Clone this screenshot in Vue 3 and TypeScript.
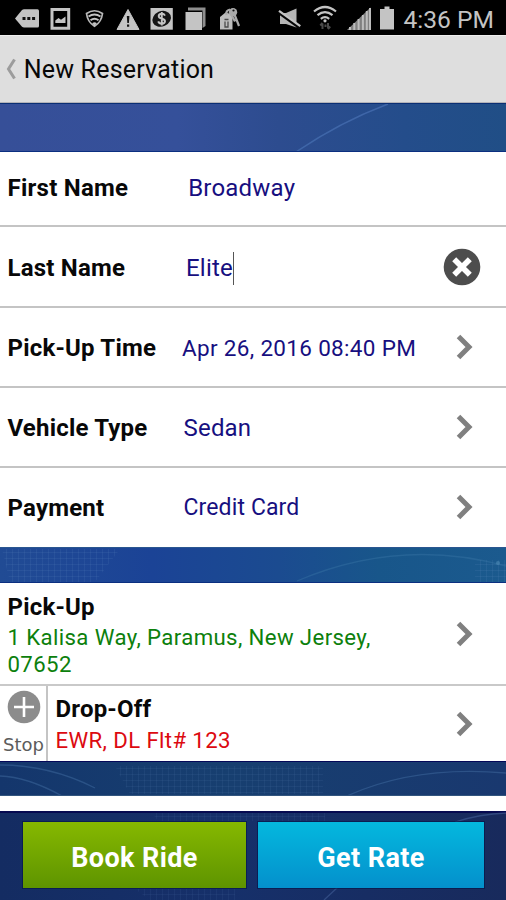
<script setup lang="ts">
interface Field {
  label: string
  value: string
  kind: string
  action: 'none' | 'clear' | 'open'
}

const fields: Field[] = [
  { label: 'First Name', value: 'Broadway', kind: 'first', action: 'none' },
  { label: 'Last Name', value: 'Elite', kind: 'last', action: 'clear' },
  { label: 'Pick-Up Time', value: 'Apr 26, 2016 08:40 PM', kind: 'time', action: 'open' },
  { label: 'Vehicle Type', value: 'Sedan', kind: 'vehicle', action: 'open' },
  { label: 'Payment', value: 'Credit Card', kind: 'payment', action: 'open' },
]
</script>

<template>
  <div class="screen">
    <div class="status">
      <svg width="45" height="36" viewBox="0 0 45 36">
        <path d="M15 18.5 22 10Q23 9.300 24 9.300H37.500Q39 9.300 39 11V26Q39 27.500 37.500 27.500H24Q23 27.500 22 26.700Z" fill="#c4c4c4" />
        <path d="M22.500 17h3v3h-3zM27.300 17h3v3h-3zM32.100 17h3v3h-3z" fill="#111" />
      </svg>
      <svg width="32" height="36" viewBox="45 0 32 36">
        <path d="M52 9.500H68.700V28.300H52Z" fill="none" stroke="#c4c4c4" stroke-width="3" />
        <path d="M55.300 23V20.500L58.500 18 61 19.800 65.500 16.500V23Z" fill="#c4c4c4" />
      </svg>
      <svg width="33" height="36" viewBox="77 0 33 36">
        <path d="M86.500 13.500Q94.500 8 102.500 13.500Q101.500 22 94.500 26.300Q87.500 22 86.500 13.500Z" fill="none" stroke="#b8b8b8" stroke-width="1.700" />
        <path d="M88.500 16.500Q94.500 12.500 100.500 16.500M90.500 20.300Q94.500 17 98.500 20.300" fill="none" stroke="#c4c4c4" stroke-width="1.900" />
        <path d="M92.200 23.200Q94.500 21.200 96.800 23.200L94.500 26Z" fill="#c4c4c4" />
      </svg>
      <svg width="35" height="36" viewBox="110 0 35 36">
        <path d="M128 9.500 139 29.500H117Z" fill="#c4c4c4" stroke="#c4c4c4" stroke-linejoin="round" />
        <path d="M126.800 16h2.600l-.5 7h-1.600zM127 24.500h2.200v2.300H127z" fill="#111" />
      </svg>
      <svg width="34" height="36" viewBox="145 0 34 36">
        <path d="M150.500 8H172.800V29.700H150.500Z" fill="#c4c4c4" />
        <ellipse cx="161.700" cy="18.800" rx="9.600" ry="7.600" fill="#151515" transform="rotate(-24 161.700 18.800)" />
        <path d="M165 15.700Q164 13.700 161.700 13.800Q158.600 14 158.700 16.200Q158.900 18.100 161.900 18.700Q165 19.400 165 21.400Q164.800 23.600 161.900 23.800Q159 23.700 158.200 21.400M161.800 12V25.600" fill="none" stroke="#c4c4c4" stroke-width="1.900" />
      </svg>
      <svg width="33" height="36" viewBox="179 0 33 36">
        <path d="M188 7.500H205.500V26L202.500 28V10.500H188Z" fill="#8e8e8e" />
        <path d="M185.500 12H202V30H185.500Z" fill="#c4c4c4" />
      </svg>
      <svg width="33" height="36" viewBox="212 0 33 36">
        <path d="M220 17 225.500 12.500 231 14 232.500 18V29.500H220Z" fill="#bdbdbd" />
        <path d="M224.500 19.500h4M225 21.500v5.500h3v-5.500" fill="none" stroke="#4c4c4c" stroke-width="1.300" />
        <circle cx="233" cy="12.200" r="4.200" fill="#aaa" />
        <circle cx="233.500" cy="10.500" r="1.100" fill="#111" />
        <path d="M226.500 15Q225.500 10.500 230 9.500M234.500 14.500 239 26M232 16 235 21.500" fill="none" stroke="#aaa" stroke-width="2.200" />
      </svg>
      <svg class="mute" width="33" height="36" viewBox="275 0 33 36">
        <path d="M280 13H286L296.500 8.500V27.500L286 24H280Z" fill="#b5b5b5" />
        <path d="M279 12.800 300 28" stroke="#050505" stroke-width="3" />
        <path d="M279 10.800 300.300 26.200" stroke="#c4c4c4" stroke-width="2.200" />
      </svg>
      <svg width="35" height="36" viewBox="308 0 35 36">
        <path d="M314 11.500Q325 2.500 336 11.500M317.500 15.200Q325 9 332.500 15.200M320.800 18.800Q325 15.500 329.200 18.800" fill="none" stroke="#c4c4c4" stroke-width="2.200" />
        <circle cx="325" cy="20.800" r="1.600" fill="#c4c4c4" />
        <path d="M322.500 29V23.500M320.300 25.500 322.500 23 M328 23V28.500M330.200 26.500 328 29M325.500 24.500V27" fill="none" stroke="#4a4a4a" stroke-width="2" />
      </svg>
      <svg width="32" height="36" viewBox="343 0 32 36">
        <path d="M347 30 370.500 7.500V30Z" fill="#808080" />
        <path d="M350 30V27M354.300 30V23M358.600 30V19M362.900 30V15M366.800 30V11M370 30V8" stroke="#bcbcbc" stroke-width="2" />
      </svg>
      <svg width="25" height="36" viewBox="375 0 25 36">
        <path d="M384.500 6.500H389.500V9H394V29.500H380V9H384.500Z" fill="#c4c4c4" />
      </svg>
      <span class="clock">4:36 PM</span>
    </div>

    <header class="bar">
      <svg class="back" width="12" height="24" viewBox="0 0 12 24">
        <path d="M9.500 2.500 3.500 12 9.500 21.500" fill="none" stroke="#9c9c9c" stroke-width="3" />
      </svg>
      <h1>New Reservation</h1>
    </header>

    <div class="band band-top">
      <svg width="506" height="49" viewBox="0 103 506 49">
        <path d="M296 152Q340 122 388 104" fill="none" stroke="#3f66a8" stroke-width="1.500" />
      </svg>
    </div>

    <section class="fields">
      <div v-for="f in fields" :key="f.label" class="row" :class="f.kind">
        <span class="label">{{ f.label }}</span>
        <span class="value">{{ f.value }}<i v-if="f.kind === 'last'" class="caret"></i></span>
        <svg v-if="f.action === 'clear'" class="clear" width="38" height="38" viewBox="0 0 38 38">
          <circle cx="19" cy="19" r="18.300" fill="#4d4d4d" />
          <path d="M11.200 11.200 26.800 26.800M26.800 11.200 11.200 26.800" stroke="#fff" stroke-width="5.600" />
        </svg>
        <svg v-if="f.action === 'open'" class="chev" width="18" height="26" viewBox="0 0 18 26">
          <path d="M2.500 2.500 13 13 2.500 23.500" fill="none" stroke="#808080" stroke-width="5" />
        </svg>
      </div>
    </section>

    <div class="band band-mid">
      <svg width="506" height="36" viewBox="0 547 506 36">
        <defs>
          <pattern id="meshMid" width="6" height="6" patternUnits="userSpaceOnUse">
            <path d="M0 .5H6M.5 0V6" stroke="#6b93cb" stroke-opacity=".12" />
          </pattern>
        </defs>
        <path d="M2 549H120L95 582H10Z" fill="url(#meshMid)" />
        <path d="M475 560H506V582H475Z" fill="url(#meshMid)" />
        <path d="M297 581Q400 537 506 566" fill="none" stroke="#3c78a8" stroke-opacity=".4" stroke-width="1.300" />
        <circle cx="498" cy="563" r="2" fill="#4f8ab6" fill-opacity=".6" />
      </svg>
    </div>

    <section class="trip">
      <div class="place pickup">
        <div class="where">
          <h2>Pick-Up</h2>
          <p>1 Kalisa Way, Paramus, New Jersey, 07652</p>
        </div>
        <svg class="chev" width="18" height="26" viewBox="0 0 18 26">
          <path d="M2.500 2.500 13 13 2.500 23.500" fill="none" stroke="#808080" stroke-width="5" />
        </svg>
      </div>
      <div class="place dropoff">
        <div class="stop">
          <svg width="34" height="34" viewBox="0 0 34 34">
            <circle cx="17" cy="17" r="16.300" fill="#8c8c8c" />
            <path d="M17 7V27M7 17H27" stroke="#fff" stroke-width="2.600" />
          </svg>
          <span>Stop</span>
        </div>
        <div class="where">
          <h2>Drop-Off</h2>
          <p>EWR, DL Flt# 123</p>
        </div>
        <svg class="chev" width="18" height="26" viewBox="0 0 18 26">
          <path d="M2.500 2.500 13 13 2.500 23.500" fill="none" stroke="#808080" stroke-width="5" />
        </svg>
      </div>
    </section>

    <div class="band band-low">
      <svg width="506" height="35" viewBox="0 761 506 35">
        <defs>
          <pattern id="meshLow" width="6" height="6" patternUnits="userSpaceOnUse">
            <path d="M0 .5H6M.5 0V6" stroke="#5f8fc0" stroke-opacity=".1" />
          </pattern>
        </defs>
        <path d="M115 766H323V794H130Z" fill="url(#meshLow)" />
        <path d="M0 765Q50 765 95 788M0 776Q28 777 62 796M347 796Q415 765 506 773" fill="none" stroke="#4a78ac" stroke-opacity=".4" stroke-width="1.300" />
      </svg>
    </div>

    <div class="spacer"></div>

    <footer class="actions">
      <svg class="deco" width="506" height="89" viewBox="0 811 506 89">
        <defs>
          <pattern id="meshFoot" width="6" height="6" patternUnits="userSpaceOnUse">
            <path d="M0 .5H6M.5 0V6" stroke="#5f80b8" stroke-opacity=".09" />
          </pattern>
        </defs>
        <path d="M152 813H325V821H158ZM135 889H235V900H150Z" fill="url(#meshFoot)" />
        <path d="M324 900 338 887M455 822Q480 814 506 813" fill="none" stroke="#4a68a2" stroke-opacity=".5" stroke-width="1.300" />
      </svg>
      <button class="btn book" type="button">Book Ride</button>
      <button class="btn rate" type="button">Get Rate</button>
    </footer>
  </div>
</template>

<style>
body {
  margin: 0;
  background: #fff;
}
</style>

<style scoped>
.screen {
  width: 506px;
  height: 900px;
  overflow: hidden;
  display: flex;
  flex-direction: column;
  background: #fff;
  font-family: Roboto, sans-serif;
  color: #080808;
}
.screen > * {
  flex: none;
  box-sizing: border-box;
}
svg {
  display: block;
  flex: none;
}
h1,
h2,
p {
  margin: 0;
}

.status {
  height: 35px;
  display: flex;
  background: #000;
  overflow: hidden;
}
.mute {
  margin-left: 30px;
}
.clock {
  padding-left: 3.500px;
  font-size: 24.600px;
  line-height: 39px;
  color: #c4c4c4;
  white-space: nowrap;
}

.bar {
  height: 68px;
  display: flex;
  align-items: center;
  padding: 2px 0 0 5px;
  background: #dedede;
  border-top: 1px solid #eee;
  border-bottom: 1px solid #b3b3b8;
}
.back {
  margin: 0 6.700px 2px 0;
}
h1 {
  font-size: 25px;
  font-weight: 400;
  line-height: 30px;
  letter-spacing: 0.200px;
}

.band {
  border-top: 1.500px solid #0b2f74;
  border-bottom: 1.500px solid #0b2f80;
  overflow: hidden;
}
.band svg {
  margin-top: -1px;
}
.band-top {
  height: 49px;
  background: linear-gradient(90deg, #364f98 0%, #35509a 35%, #2d4c8f 55%, #244d8b 80%, #204e86 100%);
}
.band-mid {
  height: 36px;
  border-top-color: #2a5690;
  background: linear-gradient(90deg, #214b94 0%, #1b4396 30%, #1b4b90 55%, #18568a 75%, #1b5a8e 100%);
}
.band-low {
  height: 35px;
  border-top-color: #040858;
  border-bottom-color: #32557e;
  background: linear-gradient(90deg, #14366c, #173f70 45%, #19386f);
}
.spacer {
  height: 15px;
}

.row {
  height: 80px;
  box-sizing: border-box;
  display: flex;
  align-items: center;
  padding: 2px 24px 0 7.500px;
  border-bottom: 2px solid #c4c4c4;
}
.row.first {
  height: 75px;
  padding-top: 0;
  padding-bottom: 1px;
}
.row.last {
  height: 81px;
  padding-right: 25px;
}
.row.payment {
  height: 79px;
  padding-top: 1px;
  border-bottom: 0;
}
.label {
  flex: none;
  width: 176px;
  font-size: 24px;
  font-weight: 700;
  line-height: 28px;
  letter-spacing: 0.200px;
}
.first .label {
  width: 180.700px;
  letter-spacing: 0.250px;
}
.last .label {
  width: 178.500px;
}
.time .label {
  width: 174.500px;
}
.value {
  flex: 1;
  font-size: 24px;
  line-height: 28px;
  letter-spacing: 0.200px;
  color: #170f80;
  white-space: nowrap;
}
.time .value {
  font-size: 22.500px;
  letter-spacing: 0.320px;
}
.payment .value {
  font-size: 23px;
  letter-spacing: 0.120px;
}
.caret {
  display: inline-block;
  width: 1.500px;
  height: 33px;
  margin: -7px 0 -5px;
  vertical-align: middle;
  background: #555;
}
.clear {
  margin-bottom: 2px;
}
.row .chev {
  margin: 0 8px 2px 0;
}

.place {
  box-sizing: border-box;
  display: flex;
  align-items: center;
}
.pickup {
  height: 103px;
  padding: 0 32px 0 7.500px;
  border-bottom: 2px solid #c9c9c9;
}
.dropoff {
  height: 75px;
  padding-right: 32px;
}
.where {
  flex: 1;
}
h2 {
  font-size: 24px;
  font-weight: 700;
  line-height: 32px;
  letter-spacing: 0.200px;
}
.where p {
  width: 380px;
  font-size: 22.200px;
  line-height: 26.500px;
  letter-spacing: 0.380px;
  color: #0c800c;
}
.pickup .where {
  padding-top: 2px;
}
.pickup h2 {
  line-height: 31px;
  margin-bottom: 1.500px;
}
.dropoff .where {
  padding: 2px 0 0 7.500px;
}
.dropoff .where p {
  line-height: 31px;
  color: #dc0a10;
}
.stop {
  width: 48px;
  height: 75px;
  box-sizing: border-box;
  display: flex;
  flex-direction: column;
  align-items: center;
  padding: 4px 0 0 1px;
  border-right: 2px solid #c4c4c4;
}
.stop span {
  margin-top: 10px;
  font-family: 'DejaVu Sans', sans-serif;
  font-size: 18px;
  line-height: 22px;
  color: #5c5c5c;
}

.actions {
  position: relative;
  height: 89px;
  display: flex;
  gap: 12px;
  padding: 11px 22px 0 23px;
  background: linear-gradient(90deg, #142c62, #16306a 45%, #182a5c);
  border-top: 2px solid #060a50;
}
.deco {
  position: absolute;
  left: 0;
  top: -2px;
}
.btn {
  position: relative;
  width: 223px;
  height: 66px;
  margin: -2px 0 0;
  padding: 5px 0 0;
  border: 0;
  font-family: Roboto, sans-serif;
  font-size: 27px;
  font-weight: 700;
  letter-spacing: 0.400px;
  color: #fff;
  box-shadow: 0 0 0 1px rgba(4, 20, 70, 0.600);
}
.book {
  background: linear-gradient(#86b800, #5e9400);
}
.rate {
  width: 226px;
  background: linear-gradient(#04b8de, #0490cc);
}
</style>
